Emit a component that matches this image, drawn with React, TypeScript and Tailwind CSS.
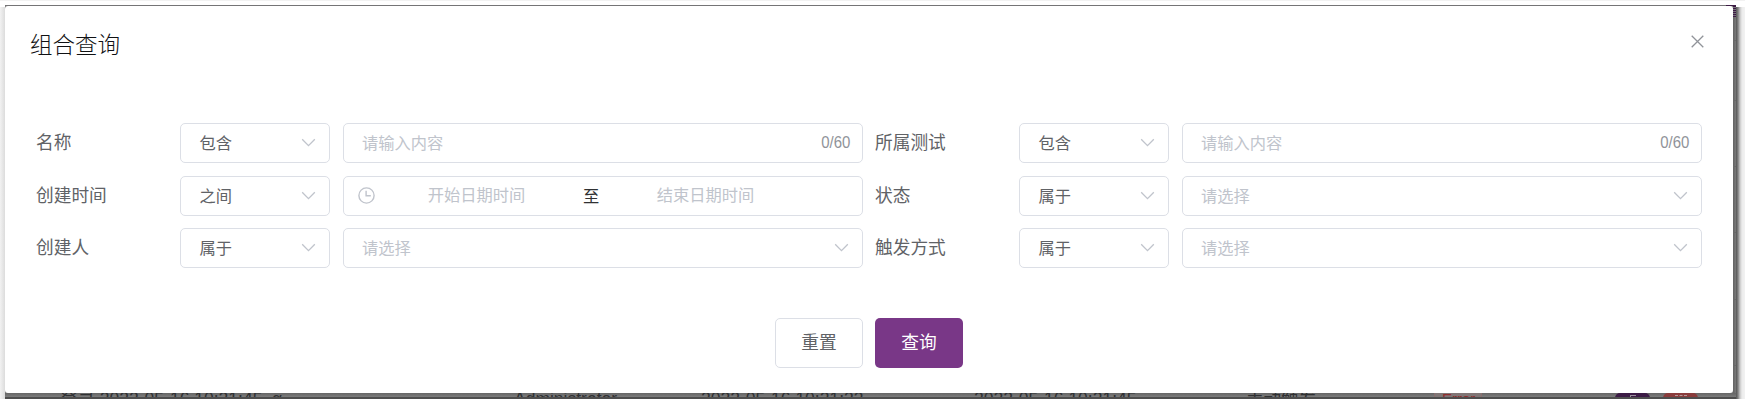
import React from "react";

type IconProps = { className?: string };

function Chevron({ className = "" }: IconProps) {
  return (
    <svg className={`h-[9px] w-[15px] shrink-0 ${className}`} viewBox="0 0 15 9" fill="none" stroke="#c0c4cc" strokeWidth="1.3">
      <path d="M1.2 1.2 7.5 7.6l6.3-6.4" />
    </svg>
  );
}

function Clock() {
  return (
    <svg className="h-[17px] w-[17px] shrink-0" viewBox="0 0 17 17" fill="none" stroke="#c0c4cc" strokeWidth="1.4">
      <circle cx="8.5" cy="8.5" r="7.6" />
      <path d="M8.1 3.8v5h4.7" />
    </svg>
  );
}

const box = "flex h-10 items-center rounded-[5px] border border-[#dcdfe6] bg-white text-[16.25px] leading-5";

function Operator({ value }: { value: string }) {
  return (
    <div className={`${box} w-[150px] justify-between pr-[13px] pl-[18.5px] text-[#606266]`}>
      <span>{value}</span>
      <Chevron className="-mt-px" />
    </div>
  );
}

function TextField() {
  return (
    <div className={`${box} w-[520px] justify-between pr-3 pl-[18px] text-[#c0c4cc]`}>
      <span>请输入内容</span>
      <span className="origin-right scale-x-[.96] text-[15.6px] text-[#909399]">0/60</span>
    </div>
  );
}

function SelectField() {
  return (
    <div className={`${box} w-[520px] justify-between pr-[13px] pl-[18px] text-[#c0c4cc]`}>
      <span>请选择</span>
      <Chevron className="-mt-px" />
    </div>
  );
}

function DateRange() {
  return (
    <div className={`${box} w-[520px] pb-0.5 pl-3.5 text-[#c0c4cc]`}>
      <Clock />
      <span className="ml-0.5 w-[199px] text-center">开始日期时间</span>
      <span className="w-[30px] pt-px text-center text-[#303133]">至</span>
      <span className="w-[199px] text-center">结束日期时间</span>
    </div>
  );
}

function Row({ label, op, children }: { label: string; op: string; children: React.ReactNode }) {
  return (
    <div className="flex h-10">
      <div className="w-36 shrink-0 pt-2 text-[17.7px] leading-6 text-[#606266]">{label}</div>
      <Operator value={op} />
      <div className="ml-[13px]">{children}</div>
    </div>
  );
}

function TableRemnant() {
  return (
    <div className="relative h-1 overflow-hidden bg-linear-to-b from-[#666] to-[#7c7c7c] text-[17.5px] leading-5 whitespace-nowrap text-[#303133]">
      <span className="absolute -top-1 left-[55px]">登录 2022-05-16 10:21:45_α</span>
      <span className="absolute -top-1 left-[509px]">Administrator</span>
      <span className="absolute -top-1 left-[696px]">2022-05-16 10:21:33</span>
      <span className="absolute -top-1 left-[969px]">2022-05-16 10:21:45</span>
      <span className="absolute -top-1 left-[1241px]">手动触发</span>
      <span className="absolute top-0 left-[1429px] h-6 w-[48px] border-x border-[#8a6e6e] bg-[#807676] pl-[7px] text-[15px] leading-[11px] text-[#8f2e2e]">
        Error
      </span>
      <span className="absolute top-0 left-[1610px] flex h-[35px] w-[35px] justify-center rounded-t-[5px] bg-[#3c1b45]">
        <i className="mt-0.5 h-4 w-1.5 border-t border-l border-[#9a8f9d]" />
      </span>
      <span className="absolute top-0 left-[1658px] flex h-[35px] w-[35px] justify-center rounded-t-[5px] bg-[#8a3c3c]">
        <i className="mt-0.5 h-4 w-3 border-t border-dashed border-[#b59a9a]" />
      </span>
    </div>
  );
}

export default function App() {
  return (
    <div className="h-[406px] w-[1745px] overflow-hidden bg-white font-['Liberation_Sans','Noto_Sans_CJK_SC',sans-serif]">
      <div className="h-px bg-[#f2f2f2]" />
      <div className="h-1" />
      <div className="flex h-[394px]">
        <div className="mt-0.5 h-[392px] w-[5px] bg-linear-to-r from-[#f2f2f2] to-[#dcdcdc]" />
        <div className="w-[1731px] bg-[#7b7b7b]">
          <div className="flex h-px justify-end bg-[#757476]">
            <div className="w-2.5 bg-[#3c1b45]" />
          </div>
          <div className="flex h-[387px]">
            <div className="w-[1728px] rounded-[3px] bg-white">
              <div className="flex h-[117px] justify-between pr-[29px] pl-[25px]">
                <h1 className="pt-[25px] text-[22.5px] leading-[30px] font-light text-[#101113]">组合查询</h1>
                <svg className="mt-[29px] h-[13px] w-[13px]" viewBox="0 0 13 13" fill="none" stroke="#909399" strokeWidth="1.3">
                  <path d="m.7.7 11.6 11.6M12.3.7.7 12.3" />
                </svg>
              </div>
              <div className="flex gap-3 pl-[31px]">
                <div className="flex w-[827px] flex-col">
                  <Row label="名称" op="包含"><TextField /></Row>
                  <div className="h-[13px]" />
                  <Row label="创建时间" op="之间"><DateRange /></Row>
                  <div className="h-3" />
                  <Row label="创建人" op="属于"><SelectField /></Row>
                </div>
                <div className="flex w-[827px] flex-col">
                  <Row label="所属测试" op="包含"><TextField /></Row>
                  <div className="h-[13px]" />
                  <Row label="状态" op="属于"><SelectField /></Row>
                  <div className="h-3" />
                  <Row label="触发方式" op="属于"><SelectField /></Row>
                </div>
              </div>
              <div className="mt-[50px] flex justify-center gap-3 text-[17.7px]">
                <button className="h-[50px] w-[88px] rounded-[5px] border border-[#dcdfe6] text-[#606266]">重置</button>
                <button className="h-[50px] w-[88px] rounded-[5px] bg-[#793787] text-white">查询</button>
              </div>
            </div>
            <div className="flex w-[3px] flex-col bg-linear-to-r from-[#626262] to-[#797979]">
              <div className="h-[11px] bg-[repeating-linear-gradient(#3c1b45_0_1px,#77707a_1px_2px)]" />
              <div className="mt-[23px] h-px bg-[#686868]" />
              <div className="mt-[59px] h-px bg-[#686868]" />
              <div className="mt-[65px] h-px bg-[#686868]" />
              <div className="mt-[65px] h-px bg-[#686868]" />
              <div className="mt-[66px] h-px bg-[#686868]" />
              <div className="mt-[65px] h-px bg-[#686868]" />
            </div>
          </div>
          <TableRemnant />
          <div className="h-0.5 bg-[#4e4e4e]" />
        </div>
        <div className="mt-0.5 h-[392px] w-[9px] bg-[linear-gradient(to_right,#555_0,#808080_2px,#c8c8c8_4px,#ececec_6px,#f2f2f2_9px)]" />
      </div>
    </div>
  );
}
